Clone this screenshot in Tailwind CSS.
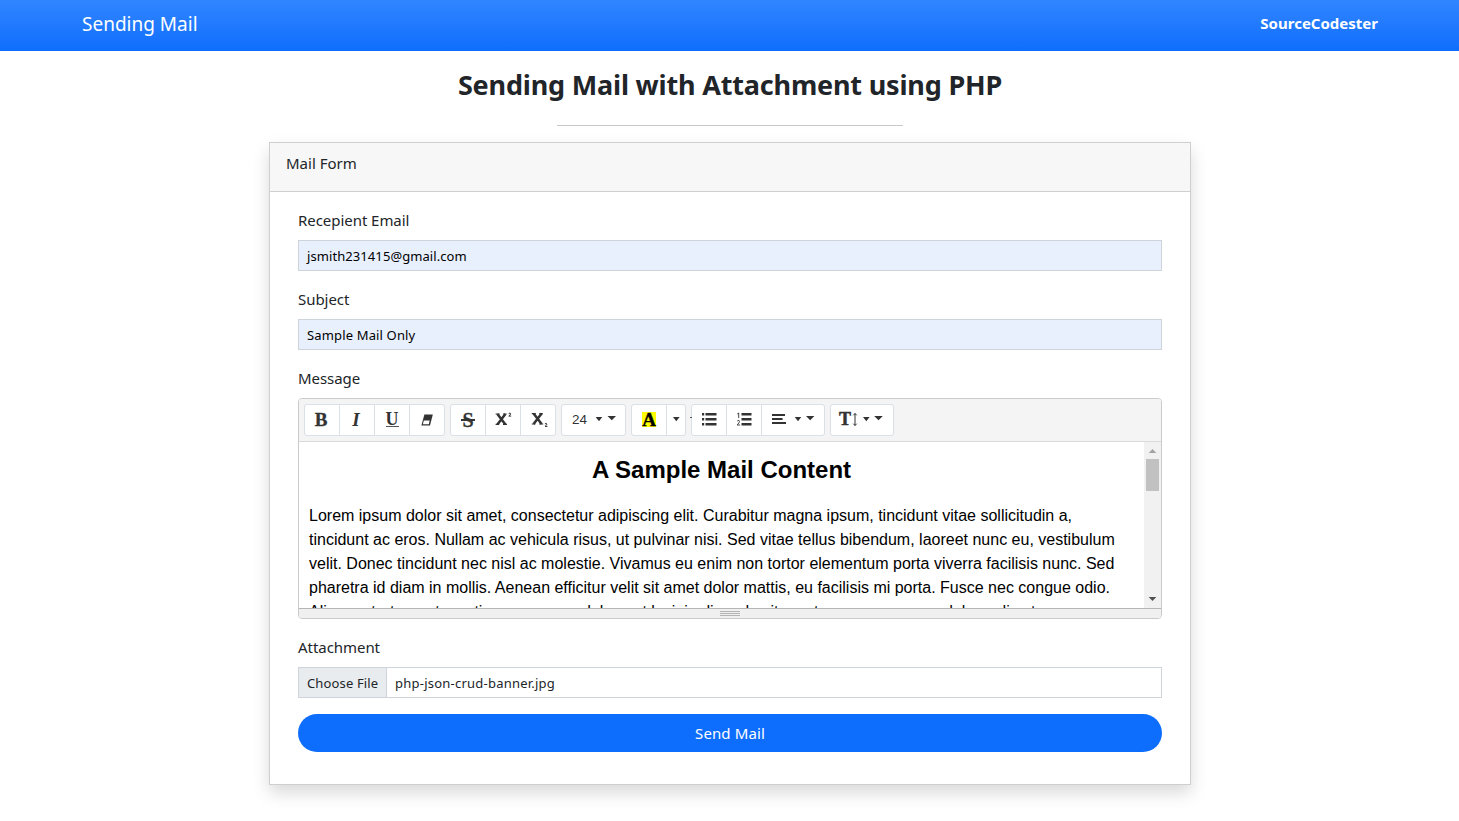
<!DOCTYPE html>
<html lang="en">
<head>
<meta charset="utf-8">
<title>Sending Mail</title>
<script src="https://cdn.jsdelivr.net/npm/@tailwindcss/browser@4"></script>
</head>
<body class="h-[821px] overflow-hidden bg-white font-['Noto_Sans',sans-serif] text-base text-[#212529]">
<nav class="flex h-[51px] items-center justify-between bg-linear-to-b from-[#3085ff] to-[#0d6efd] pr-[81px] pb-[3px] pl-[82px] text-white">
  <a class="text-[19px] leading-[30px]">Sending Mail</a>
  <a class="pb-0.5 text-[15px] leading-6 font-bold">SourceCodester</a>
</nav>
<main class="flex flex-col items-center pl-px">
  <h3 class="mt-[17px] text-[27px] leading-[34px] font-bold tracking-[-0.18px] whitespace-nowrap">Sending Mail with Attachment using PHP</h3>
  <hr class="mt-[23px] h-px w-[346px] border-0 bg-[#c8c9ca]">
  <section class="mt-4 h-[643px] w-[922px] border border-[#cfcfcf] bg-white shadow-[0_8px_16px_rgba(0,0,0,0.15)]">
    <header class="h-[49px] border-b border-[#cfcfcf] bg-[#f7f7f7] px-4 pt-2"><div class="text-[15px] leading-6">Mail Form</div></header>
    <form class="flex flex-col px-7 pt-4">
      <label class="h-6 text-[15px] leading-6 tracking-[-0.05px]">Recepient Email</label>
      <div class="mt-2 h-[31px] border border-[#ced4da] bg-[#e8f0fe] px-2 text-[13px] leading-[31px] tracking-[0.08px] text-black">jsmith231415@gmail.com</div>
      <label class="mt-4 h-6 text-[15px] leading-6 tracking-[-0.05px]">Subject</label>
      <div class="mt-2 h-[31px] border border-[#ced4da] bg-[#e8f0fe] px-2 text-[13px] leading-[31px] tracking-[0.15px] text-black">Sample Mail Only</div>
      <label class="mt-4 h-6 text-[15px] leading-6 tracking-[-0.05px]">Message</label>

      <div class="mt-2 flex h-[221px] flex-col overflow-hidden rounded-[4px] border border-[#cacaca] bg-white">
        <!-- Editor toolbar -->
        <div class="flex h-[43px] shrink-0 gap-[5px] border-b border-[#d9d9d9] bg-[#f4f4f4] px-[5px] pt-[5px] text-[#333]">
          <div class="grid h-[32px] w-[141px] grid-cols-[35px_35px_35px_34px] divide-x divide-[#dae0e5] rounded-[3px] border border-[#dae0e5] bg-white *:flex *:items-center *:justify-center">
            <div class="pr-0.5"><span class="font-['Liberation_Serif',serif] text-[19px] leading-5 font-bold [-webkit-text-stroke:0.3px_#333]">B</span></div>
            <div class="pr-0.5"><span class="font-['Liberation_Serif',serif] text-[19px] leading-5 font-bold italic">I</span></div>
            <div><span class="border-b border-[#555] font-['Liberation_Serif',serif] text-[18px] leading-[13px] font-bold">U</span></div>
            <div><svg class="h-3 w-3" viewBox="0 0 12 12"><path d="M3.4.5h8.4L9 11.5H.4z" fill="#333"/><path d="M2.8 6.6h5.9l-.9 3.6H1.9z" fill="#fff"/></svg></div>
          </div>
          <div class="grid h-[32px] w-[106px] grid-cols-[35px_35px_34px] divide-x divide-[#dae0e5] rounded-[3px] border border-[#dae0e5] bg-white *:flex *:items-center *:justify-center">
            <div><span class="relative font-['Liberation_Serif',serif] text-[20px] leading-6 font-bold [-webkit-text-stroke:0.3px_#333]">S<i class="absolute top-[11px] -left-[1px] h-[2px] w-[14px] bg-[#333]"></i></span></div>
            <div><svg class="-mt-[3px] h-4 w-[18px]" viewBox="0 0 18 16" fill="none" stroke="#333" stroke-width="2.5"><path d="M3.4 3l8 10.4M11.4 3l-8 10.4"/><path d="M1.6 3h4M9 3h3.6M1.6 13.4h3.6M9 13.4h4" stroke-width="1.2"/><path d="M14.7 2.6q1.9-1.3 1.9.3 0 .9-1.8 2.2h2.4" stroke-width="1"/></svg></div>
            <div class="pl-1"><svg class="h-[18px] w-[18px]" viewBox="0 -1 18 18" fill="none" stroke="#333" stroke-width="2.5"><path d="M2.6 1.6l8 10.4M10.6 1.6l-8 10.4"/><path d="M.8 1.6h4M8.2 1.6h3.6M.8 12h3.6M8.2 12h4" stroke-width="1.2"/><path d="M13.9 11.9q1.9-1.3 1.9.3 0 .9-1.8 2.2h2.4" stroke-width="1"/></svg></div>
          </div>
          <div class="flex h-[32px] w-[65px] rounded-[3px] border border-[#dae0e5] bg-white pl-[10px]">
            <span class="font-['Liberation_Sans',sans-serif] text-[13.5px] leading-[30px]">24</span>
            <svg class="mt-[10px] ml-[9px] h-2 w-5" viewBox="0 0 20 8" fill="#333"><path d="M-.3 2h6.6L3 6.3zM11.5 1h8.5l-4.2 4.3z"/></svg>
          </div>
          <div class="relative flex h-[32px] w-[55px] rounded-[3px] border border-[#dae0e5] bg-white">
            <div class="flex w-[35px] items-center justify-center border-r border-[#dae0e5] pb-0.5"><span class="flex h-[15px] w-[14px] items-center justify-center bg-[#ff0] font-['Liberation_Serif',serif] text-[19px] leading-[15px] font-bold text-black [-webkit-text-stroke:0.4px_#000]">A</span></div>
            <div class="flex flex-1 items-center justify-center pb-0.5"><svg class="h-2 w-[7px]" viewBox="0 0 7 8" fill="#333"><path d="M0 2h6.6L3.3 6.3z"/></svg></div>
            <i class="absolute top-[12px] left-[58px] h-px w-[2px] bg-[#555]"></i>
          </div>
          <div class="flex h-[32px] w-[134px] divide-x divide-[#dae0e5] rounded-[3px] border border-[#dae0e5] bg-white *:flex *:items-center *:pb-0.5">
            <div class="w-[35px] justify-center"><svg class="h-4 w-4" viewBox="0 0 16 16" fill="#333"><path d="M1 2h2.2v2.4H1zM1 7h2.2v2.4H1zM1 12h2.2v2.4H1zM4.5 2h11v2.4h-11zM4.5 7h11v2.4h-11zM4.5 12h11v2.4h-11z"/></svg></div>
            <div class="w-[35px] justify-center"><svg class="h-4 w-4" viewBox="0 0 16 16" fill="#333"><path d="M5.5 2h10v2.4h-10zM5.5 7h10v2.4h-10zM5.5 12h10v2.4h-10z"/><path d="M1.2 3l1.5-1v5M1.2 10.2Q2 9 3 9.4q1.2.8-.2 2.6L1.2 14h2.9" fill="none" stroke="#333" stroke-width=".9"/></svg></div>
            <div class="flex-1 pl-[10px]"><svg class="h-4 w-[44px]" viewBox="0 0 44 16" fill="#333"><path d="M0 3h13v2H0zM0 7h10.6v2H0zM0 11h14v2H0zM22.7 6h6.6L26 10.3zM34 5h8.4l-4.2 4.3z"/></svg></div>
          </div>
          <div class="flex h-[32px] w-[64px] items-center rounded-[3px] border border-[#dae0e5] bg-white pb-0.5 pl-2">
            <span class="w-[13px] font-['Liberation_Serif',serif] text-[18px] leading-[15px] font-bold [-webkit-text-stroke:0.5px_#333]">T</span>
            <svg class="h-4 w-8" viewBox="0 0 32 16"><path d="M3 2.5v12M1.3 4.3L3 2.5l1.7 1.8M1.3 12.7L3 14.5l1.7-1.8" fill="none" stroke="#333"/><path d="M11 6h6.6l-3.3 4.3zM22.2 5h8.6l-4.3 4.3z" fill="#333"/></svg>
          </div>
        </div>
        <!-- Message body -->
        <div class="flex min-h-0 flex-1">
          <div class="flex-1 overflow-hidden px-[10px] pt-[10px] font-['Liberation_Sans',sans-serif] text-black">
            <h2 class="text-center text-2xl leading-9 font-bold">A Sample Mail Content</h2>
            <p class="mt-4 text-base leading-6 whitespace-nowrap">Lorem ipsum dolor sit amet, consectetur adipiscing elit. Curabitur magna ipsum, tincidunt vitae sollicitudin a,<br>tincidunt ac eros. Nullam ac vehicula risus, ut pulvinar nisi. Sed vitae tellus bibendum, laoreet nunc eu, vestibulum<br>velit. Donec tincidunt nec nisl ac molestie. Vivamus eu enim non tortor elementum porta viverra facilisis nunc. Sed<br>pharetra id diam in mollis. Aenean efficitur velit sit amet dolor mattis, eu facilisis mi porta. Fusce nec congue odio.<br>Aliquam tortor metus, etiam ac cursus dolor, est lacinia diam da sit amet nunc, accumsan dolor a di est</p>
          </div>
          <div class="flex w-[17px] flex-col items-center justify-between bg-[#f1f1f1]">
            <div class="flex flex-col items-center">
              <svg class="h-[17px] w-[17px]" viewBox="0 0 17 17" fill="#a3a3a3"><path d="M4.7 11h7.6L8.5 7z"/></svg>
              <div class="h-8 w-[13px] bg-[#c1c1c1]"></div>
            </div>
            <svg class="h-[17px] w-[17px]" viewBox="0 0 17 17" fill="#505050"><path d="M4.7 6h7.6l-3.8 4z"/></svg>
          </div>
        </div>
        <div class="flex h-[10px] shrink-0 flex-col items-center gap-px border-t border-[#b5b5b5] bg-[#f0f0f0] pt-[2px] *:h-px *:w-5 *:bg-[#b5b5b5]">
          <i></i><i></i><i></i>
        </div>
      </div>

      <label class="mt-4 h-6 text-[15px] leading-6 tracking-[-0.05px]">Attachment</label>
      <div class="mt-2 flex h-[31px] border border-[#ced4da] text-[13px] leading-[31px]">
        <span class="w-[88px] border-r border-[#ced4da] bg-[#e9ecef] pl-2 tracking-[0.15px]">Choose File</span><span class="pl-2 tracking-[0.23px]">php-json-crud-banner.jpg</span>
      </div>
      <button type="button" class="mt-4 h-[38px] rounded-full bg-[#0d6efd] text-[15px] leading-[38px] tracking-[0.1px] text-white">Send Mail</button>
    </form>
  </section>
</main>
</body>
</html>
